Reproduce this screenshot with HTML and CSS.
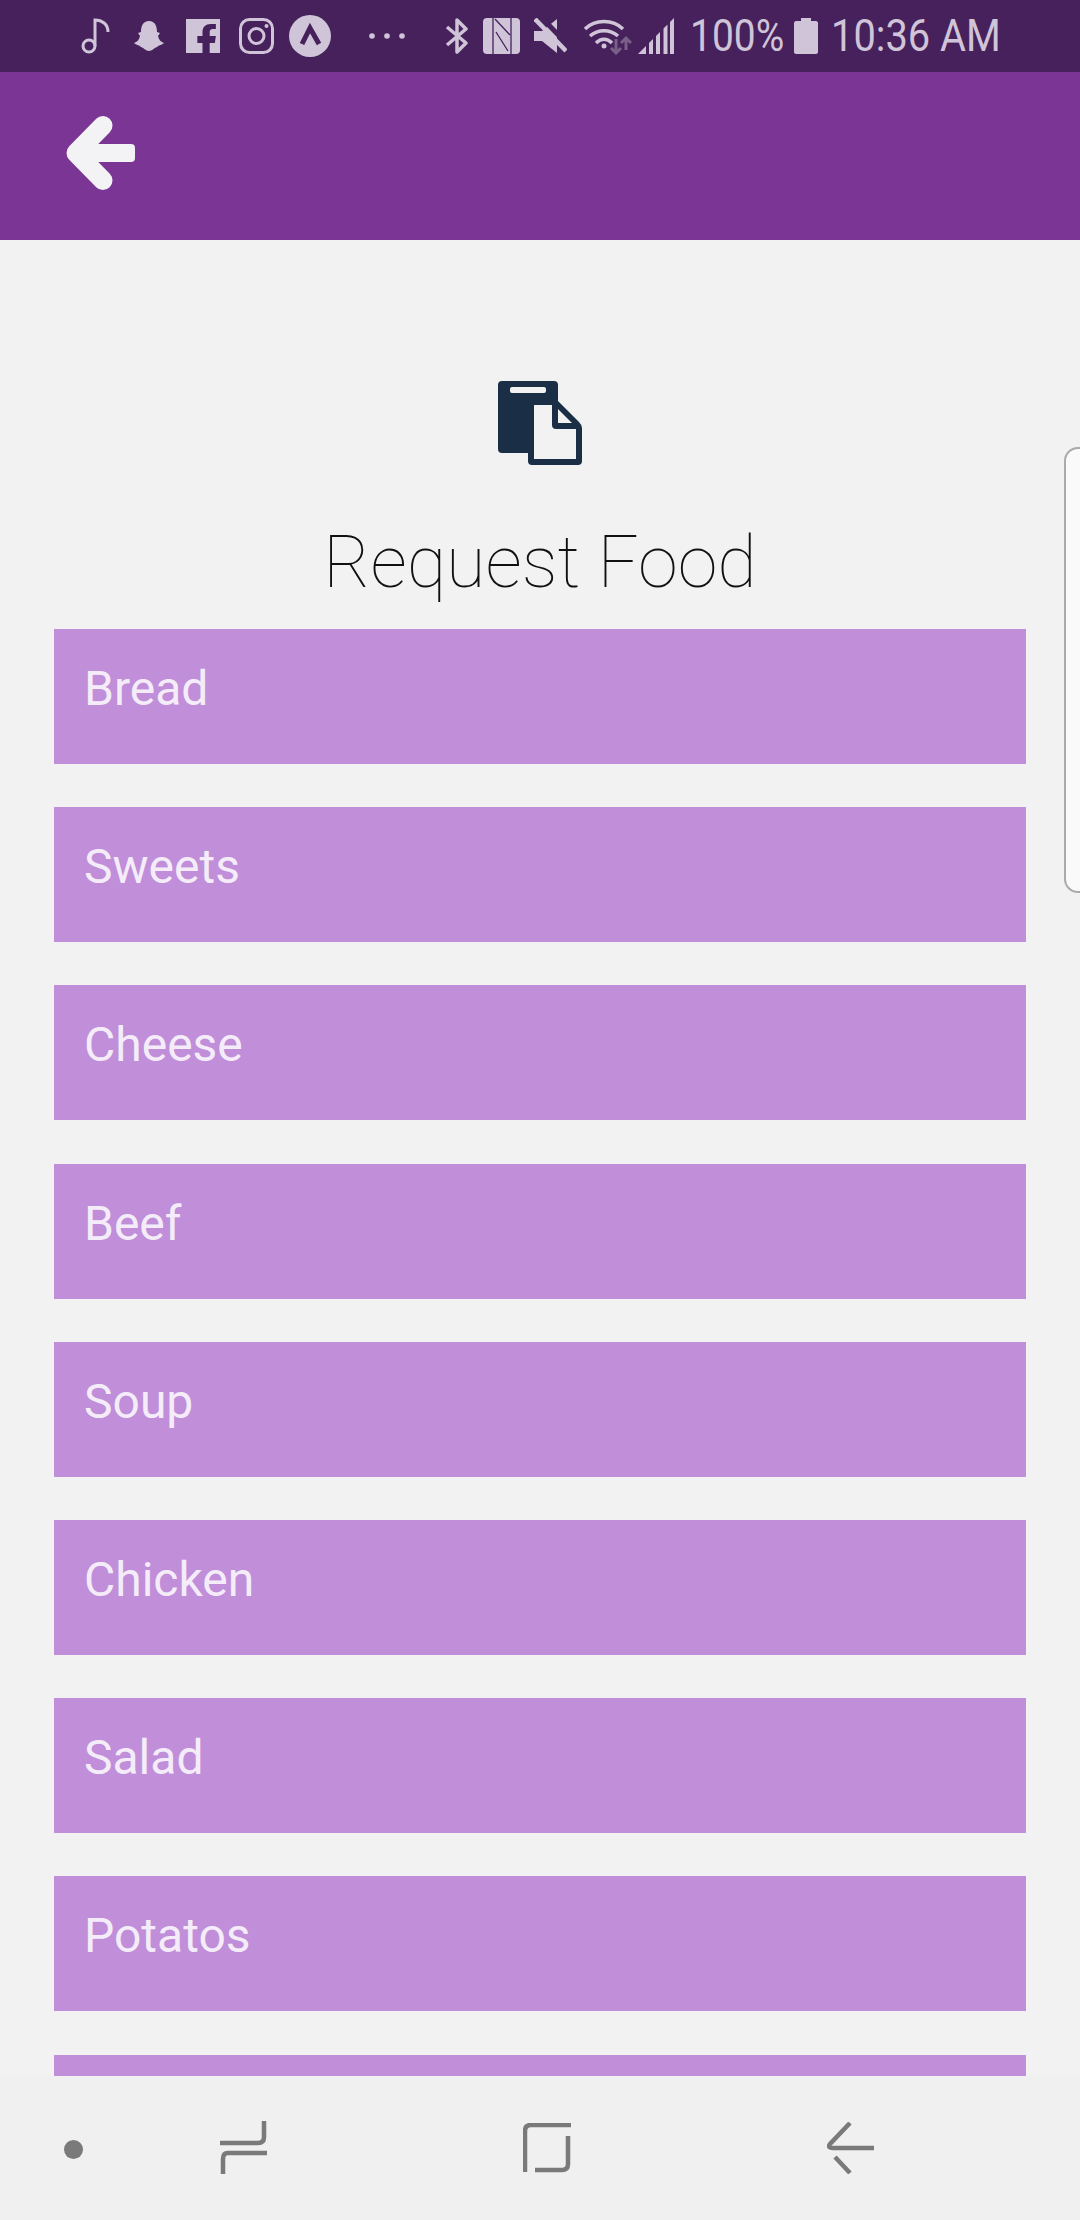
FILE: index.html
```html
<!DOCTYPE html>
<html lang="en">
<head>
    <meta charset="UTF-8">
    <meta name="viewport" content="width=device-width, initial-scale=1.0">
    <title>Request Food</title>
    <link rel="stylesheet" href="styles.css">
</head>
<body>

    <div class="screen">
        <div class="status-bar">
            <svg class="si note" width="29" height="36" viewBox="0 0 29 36"><circle cx="8" cy="28" r="6" fill="none" stroke="currentColor" stroke-width="3"/><path d="M14 28V2C21 2 27 6 27 14" fill="none" stroke="currentColor" stroke-width="3"/></svg>
            <svg class="si snap" width="30" height="30" viewBox="0 0 30 30"><path d="M15 0C21 0 23 5 23 11L26 12 24 15C25 19 27 21 30 22 28 24 25 24 23 26 20 27 18 30 15 30S10 27 7 26C5 24 2 24 0 22 3 21 5 19 6 15L4 12 7 11C7 5 9 0 15 0Z" fill="currentColor"/></svg>
            <svg class="si fb" width="34" height="34" viewBox="0 0 33 34" preserveAspectRatio="none"><path d="M0 0H33V34H23V24H28L29 17H23V13C23 11 24 10 26 10H29V5H24C19 5 16 8 16 13V17H11V24H16V34H0Z" fill="currentColor"/></svg>
            <svg class="si ig" width="35" height="36" viewBox="0 0 35 36"><rect x="1.500" y="1.500" width="32" height="33" rx="9" fill="none" stroke="currentColor" stroke-width="3"/><circle cx="17.500" cy="18" r="7.500" fill="none" stroke="currentColor" stroke-width="3"/><circle cx="27.500" cy="8" r="2" fill="currentColor"/></svg>
            <svg class="si expo" width="42" height="42" viewBox="0 0 42 42"><circle cx="21" cy="21" r="21" fill="currentColor"/><path d="M13 29L21 13 30 29" fill="none" stroke="#46215c" stroke-width="5"/></svg>
            <svg class="si dots" width="36" height="8" viewBox="0 0 36 8"><circle cx="3" cy="4" r="2.800" fill="currentColor"/><circle cx="18" cy="4" r="2.800" fill="currentColor"/><circle cx="33" cy="4" r="2.800" fill="currentColor"/></svg>
            <svg class="si bt" width="23" height="38" viewBox="0 0 23 38"><path d="M2 10L21 26 12 35V3L21 12 2 28" fill="none" stroke="currentColor" stroke-width="3.500" stroke-linejoin="round"/></svg>
            <svg class="si nfc" width="37" height="36" viewBox="0 0 37 36"><rect width="37" height="36" rx="4" fill="currentColor"/><path d="M10 0V36M28 0V36M12 1L27 17M13 14L25 33" fill="none" stroke="#46215c" stroke-width="1.300"/></svg>
            <svg class="si mute" width="33" height="36" viewBox="0 0 33 36"><path d="M0 13H8L23 1V35L8 23H0Z" fill="currentColor"/><path d="M6 -2L38 31" stroke="#46215c" stroke-width="5"/><path d="M1 1L32 33" stroke="currentColor" stroke-width="4.500"/></svg>
            <svg class="si wifi" width="48" height="37" viewBox="0 0 48 37"><path d="M1 11C11 1 29 1 39 11M6 18C14 11 26 11 34 18M12 25C17 20 23 20 28 25" fill="none" stroke="currentColor" stroke-width="3.500"/><circle cx="20" cy="28" r="2.500" fill="currentColor"/><path d="M32 21V35M27 30L32 35 37 30M42 32V20M37 25L42 20 47 25" fill="none" stroke="#7a6089" stroke-width="3"/></svg>
            <svg class="si signal" width="36" height="36" viewBox="0 0 36 36"><path d="M0 36L8 28V36ZM11 36V25L15 21V36ZM18 36V18L22 14V36ZM25.500 36V10.500L29.500 6.500V36ZM32 36V4L36 0V36Z" fill="currentColor"/></svg>
            <span class="st-text pct">100%</span>
            <svg class="si batt" width="24" height="36" viewBox="0 0 24 36"><path d="M7 0H17V3H22C23 3 24 4 24 5V34C24 35 23 36 22 36H2C1 36 0 35 0 34V5C0 4 1 3 2 3H7Z" fill="currentColor"/></svg>
            <span class="st-text clock">10:36 AM</span>
        </div>

        <div class="app-bar">
            <svg class="back-arrow" width="69" height="76" viewBox="0 0 69 76"><path d="M37 10.500L10 38 37 65.500" fill="none" stroke="#f3f3f5" stroke-width="19" stroke-linecap="round" stroke-linejoin="round"/><rect x="14" y="29" width="55" height="18" rx="4" fill="#f3f3f5"/></svg>
        </div>

        <div class="content">
            <svg class="doc-icon" width="84" height="84" viewBox="0 0 84 84"><path fill-rule="evenodd" d="M4 0H56Q60 0 60 4V20L81 41Q84 44 84 47V80Q84 84 80 84H34Q30 84 30 80V72H4Q0 72 0 68V4Q0 0 4 0ZM14 6Q12 6 12 8V10Q12 12 14 12H46Q48 12 48 10V8Q48 6 46 6ZM36 24V78H78V48H58Q54 48 54 44V24ZM60 28V42H74Z" fill="#1a2f45"/></svg>
            <h1 class="title">Request Food</h1>
            <div class="food-list">
                <div class="food-row">Bread</div>
                <div class="food-row">Sweets</div>
                <div class="food-row">Cheese</div>
                <div class="food-row">Beef</div>
                <div class="food-row">Soup</div>
                <div class="food-row">Chicken</div>
                <div class="food-row">Salad</div>
                <div class="food-row">Potatos</div>
                <div class="food-row"></div>
            </div>
            <div class="side-tab"></div>
        </div>

        <div class="nav-bar">
            <svg class="nav-dot" width="19" height="19" viewBox="0 0 19 19"><circle cx="9.500" cy="9.500" r="9.500" fill="#7a7a7a"/></svg>
            <svg class="nav-recent" width="48" height="54" viewBox="0 0 48 54"><path d="M44 0V16Q44 22 38 22H0M47 32H8Q3 32 3 38V53" fill="none" stroke="#7a7a7a" stroke-width="4.500"/></svg>
            <svg class="nav-home" width="48" height="50" viewBox="0 0 48 50"><path d="M48 2H8Q2 2 2 8V49M45 13V41Q45 47 39 47H12" fill="none" stroke="#7a7a7a" stroke-width="4.500"/></svg>
            <svg class="nav-back" width="48" height="52" viewBox="0 0 48 52"><path d="M23 1L3 22Q0 26 6 26H47M8 35L23 51" fill="none" stroke="#7a7a7a" stroke-width="4.500"/></svg>
        </div>
    </div>

</body>
</html>
```

FILE: styles.css
```css
body {
    margin: 0;
    font-family: 'Roboto', sans-serif;
    background: #f2f2f2;
}
.screen {
    width: 1080px;
    height: 2220px;
    display: flex;
    flex-direction: column;
    overflow: hidden;
}

/* status bar */
.status-bar {
    height: 72px;
    flex: none;
    display: flex;
    align-items: center;
    padding-left: 81px;
    background: #46215c;
    color: #d0c4d8;
}
.si {
    flex: none;
}
.snap { margin-left: 24px; }
.fb { margin-left: 22px; }
.ig { margin-left: 19px; }
.expo { margin-left: 15px; }
.dots { margin-left: 38px; }
.bt { margin-left: 40px; }
.nfc { margin-left: 15px; }
.mute { margin-left: 14px; }
.wifi { margin-left: 17px; }
.signal { margin-left: 6px; }
.batt { margin-left: 13px; }
.st-text {
    font-size: 45px;
    line-height: 72px;
    white-space: nowrap;
    transform-origin: left center;
}
.pct {
    margin-left: 16px;
    width: 91px;
    transform: scaleX(0.865);
}
.clock {
    margin-left: 13px;
    transform: scaleX(0.885);
}

/* app bar */
.app-bar {
    height: 168px;
    flex: none;
    box-sizing: border-box;
    padding: 43px 0 0 66px;
    background: #7a3595;
}

/* main */
.content {
    flex: 1;
    min-height: 0;
    position: relative;
    display: flex;
    flex-direction: column;
    align-items: center;
    padding-top: 141px;
    overflow: hidden;
}
.doc-icon {
    flex: none;
}
.title {
    flex: none;
    margin: 0;
    height: 164px;
    padding-top: 56px;
    box-sizing: border-box;
    font-size: 72px;
    line-height: 84px;
    font-weight: 100;
    color: #111;
    white-space: nowrap;
}
.food-list {
    flex: none;
    width: 972px;
    display: flex;
    flex-direction: column;
    gap: 43.200px;
}
.food-row {
    height: 135px;
    flex: none;
    box-sizing: border-box;
    padding: 33px 0 0 30px;
    background: #c18ed9;
    color: #f4edf9;
    font-size: 48px;
    line-height: 54px;
}
.side-tab {
    position: absolute;
    top: 207px;
    right: -16px;
    width: 28px;
    height: 442px;
    border: 2px solid #aaa;
    border-radius: 14px;
    background: #fafafa;
}

/* nav bar */
.nav-bar {
    height: 144px;
    flex: none;
    display: flex;
    align-items: center;
    padding-left: 64px;
    background: #f0f0f0;
}
.nav-dot { margin-top: 3px; }
.nav-recent { margin-left: 137px; }
.nav-home { margin-left: 255px; }
.nav-back { margin-left: 256px; }
```
